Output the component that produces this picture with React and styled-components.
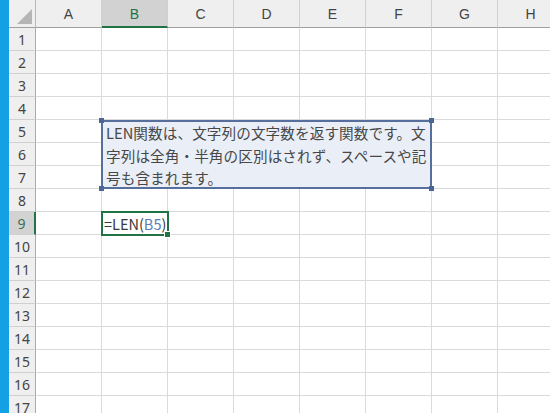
import React from "react";
import styled, { createGlobalStyle } from "styled-components";

const GlobalStyle = createGlobalStyle`
  html, body {
    margin: 0;
    padding: 0;
    background: #ffffff;
    overflow: hidden;
  }
  body {
    font-family: "Noto Sans CJK JP", "Liberation Sans", sans-serif;
  }
`;

const COLS = ["A", "B", "C", "D", "E", "F", "G", "H"];
const ROWS = 17;

const Window = styled.div`
  display: flex;
  width: 550px;
  height: 413px;
  overflow: hidden;
`;

const Stripe = styled.div`
  width: 9px;
  flex: none;
  background: #13a0e4;
`;

const Sheet = styled.div`
  display: grid;
  grid-template-columns: 27px repeat(8, 66px);
  grid-template-rows: 28px repeat(${ROWS}, 23px);
  flex: none;
`;

const Corner = styled.div`
  grid-row: 1;
  grid-column: 1;
  background: #efefef;
  border-right: 1px solid #b9b9b9;
  border-bottom: 1px solid #9f9f9f;
  box-sizing: border-box;
  position: relative;
  &::after {
    content: "";
    position: absolute;
    right: 3px;
    bottom: 3px;
    width: 0;
    height: 0;
    border-left: 15px solid transparent;
    border-bottom: 15px solid #b5b5b5;
  }
`;

const ColHead = styled.div`
  grid-row: 1;
  grid-column: ${(p) => p.$c};
  display: flex;
  align-items: center;
  justify-content: center;
  box-sizing: border-box;
  padding-top: 1px;
  font-family: "Liberation Sans", "Noto Sans", sans-serif;
  font-size: 14px;
  color: ${(p) => (p.$active ? "#217346" : "#444444")};
  background: ${(p) => (p.$active ? "#d2d2d2" : "#efefef")};
  border-right: 1px solid #d0d0d0;
  border-bottom: ${(p) => (p.$active ? "2px solid #217346" : "1px solid #9f9f9f")};
`;

const RowHead = styled.div`
  grid-row: ${(p) => p.$r};
  grid-column: 1;
  display: flex;
  align-items: center;
  justify-content: center;
  box-sizing: border-box;
  font-family: "Noto Sans", "Liberation Sans", sans-serif;
  font-size: 14px;
  color: ${(p) => (p.$active ? "#3d6f55" : "#444444")};
  background: ${(p) => (p.$active ? "#d2d2d2" : "#efefef")};
  border-bottom: 1px solid #d0d0d0;
  border-right: ${(p) => (p.$active ? "2px solid #217346" : "1px solid #ababab")};
`;

const Cell = styled.div`
  grid-row: ${(p) => p.$r};
  grid-column: ${(p) => p.$c};
  box-sizing: border-box;
  border-right: 1px solid #dadada;
  border-bottom: 1px solid #dadada;
  position: relative;
  display: flex;
  align-items: center;
  padding-left: 2px;
  font-size: 14.5px;
  color: #3a3a3a;
  white-space: nowrap;
  ${(p) =>
    p.$selected &&
    `
    z-index: 2;
    outline: 2px solid #217346;
    outline-offset: -1px;
  `}
`;

const FillHandle = styled.span`
  position: absolute;
  right: -4px;
  bottom: -4px;
  width: 5px;
  height: 5px;
  background: #217346;
  border: 1px solid #ffffff;
`;

const Ref = styled.span`
  color: #5b7db3;
`;

const TextBox = styled.div`
  grid-row: 6 / 9;
  grid-column: 3 / 8;
  margin: 0 0 0 -1px;
  z-index: 3;
  position: relative;
  box-sizing: border-box;
  background: #e9eef7;
  border: 2px solid #566f9c;
  padding: 0 3px 0 3px;
  font-size: 14.6px;
  line-height: 22.5px;
  color: #474747;
  letter-spacing: 0.1px;
`;

const Handle = styled.span`
  position: absolute;
  width: 5px;
  height: 5px;
  background: #4a6596;
  ${(p) => (p.$top ? "top: -4px;" : "bottom: -4px;")}
  ${(p) => (p.$left ? "left: -4px;" : "right: -4px;")}
`;

export default function App() {
  const cells = [];
  for (let r = 1; r <= ROWS; r++) {
    cells.push(
      <RowHead key={"h" + r} $r={r + 1} $active={r === 9}>
        {r}
      </RowHead>
    );
    COLS.forEach((col, i) => {
      const selected = r === 9 && col === "B";
      cells.push(
        <Cell key={col + r} $r={r + 1} $c={i + 2} $selected={selected}>
          {selected && (
            <>
              =LEN(<Ref>B5</Ref>)
              <FillHandle />
            </>
          )}
        </Cell>
      );
    });
  }

  return (
    <Window>
      <GlobalStyle />
      <Stripe />
      <Sheet>
        <Corner />
        {COLS.map((col, i) => (
          <ColHead key={col} $c={i + 2} $active={col === "B"}>
            {col}
          </ColHead>
        ))}
        {cells}
        <TextBox>
          LEN関数は、文字列の文字数を返す関数です。文字列は全角・半角の区別はされず、スペースや記号も含まれます。
          <Handle $top $left />
          <Handle $top />
          <Handle $left />
          <Handle />
        </TextBox>
      </Sheet>
    </Window>
  );
}
